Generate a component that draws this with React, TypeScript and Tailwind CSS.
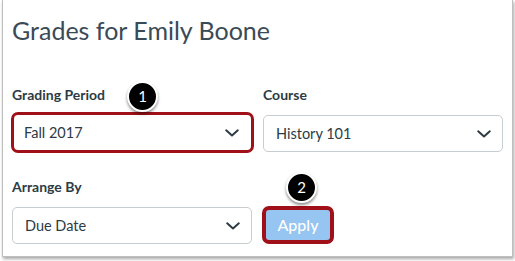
import React from "react";

function Chevron() {
  return (
    <svg width="14" height="8" viewBox="0 0 14 8" fill="none" className="shrink-0">
      <path d="M1.2 1.3L7 6.5L12.8 1.3" stroke="#2d3b45" strokeWidth="2" strokeLinecap="round" strokeLinejoin="round" />
    </svg>
  );
}

function Select({ value, className = "" }: { value: string; className?: string }) {
  return (
    <div
      className={
        "flex h-[37px] w-[240px] items-center justify-between rounded-[5px] border border-[#c7cdd1] bg-white pl-[12px] pr-[11px] text-[14.5px] text-[#2d3b45] " +
        className
      }
    >
      <span>{value}</span>
      <Chevron />
    </div>
  );
}

function Badge({ n, className }: { n: string; className: string }) {
  return (
    <div
      className={
        "absolute flex h-[31px] w-[31px] items-center justify-center rounded-full border-2 border-white bg-black text-[15px] text-white shadow-[0_2px_3px_rgba(0,0,0,0.45)] " +
        className
      }
    >
      {n}
    </div>
  );
}

export default function App() {
  return (
    <div className="h-[261px] w-[515px] bg-white pl-[2px] font-['Lato','Liberation_Sans',sans-serif] text-[#2d3b45]">
      <div className="relative h-[257px] w-[511px] border-x border-b border-[#bfbfbf] bg-white pl-[9px] pt-[16px] shadow-[1px_2px_3px_rgba(0,0,0,0.35)]">
        <h1 className="text-[25px] leading-[29px] text-[#3a4a56]">Grades for Emily Boone</h1>
        <div className="mt-[41px] grid grid-cols-[240px_240px] gap-x-[11px]">
          <div className="flex flex-col">
            <div className="text-[14px] font-bold leading-[17px]">Grading Period</div>
            <div className="mt-[9px] -ml-[1px] h-[41px] w-[243px] rounded-[7px] border-[3px] border-[#9f1018] bg-white">
              <div className="flex h-full items-center justify-between pl-[10px] pr-[12px] text-[14.5px]">
                <span>Fall 2017</span>
                <Chevron />
              </div>
            </div>
          </div>
          <div className="flex flex-col">
            <div className="text-[14px] font-bold leading-[17px]">Course</div>
            <Select value="History 101" className="mt-[12px]" />
          </div>
          <div className="mt-[25px] flex flex-col">
            <div className="text-[14px] font-bold leading-[17px]">Arrange By</div>
            <Select value="Due Date" className="mt-[12px]" />
          </div>
          <div className="mt-[25px] flex flex-col">
            <div className="h-[17px]" />
            <div className="mt-[11px] -ml-[1px] flex h-[38px] w-[72px] items-center justify-center rounded-[7px] border-[4px] border-[#9f1018] bg-[#95c5f0] text-[16px] font-medium text-white">
              Apply
            </div>
          </div>
        </div>
        <Badge n="1" className="left-[124px] top-[81px]" />
        <Badge n="2" className="left-[283px] top-[172px]" />
      </div>
    </div>
  );
}
